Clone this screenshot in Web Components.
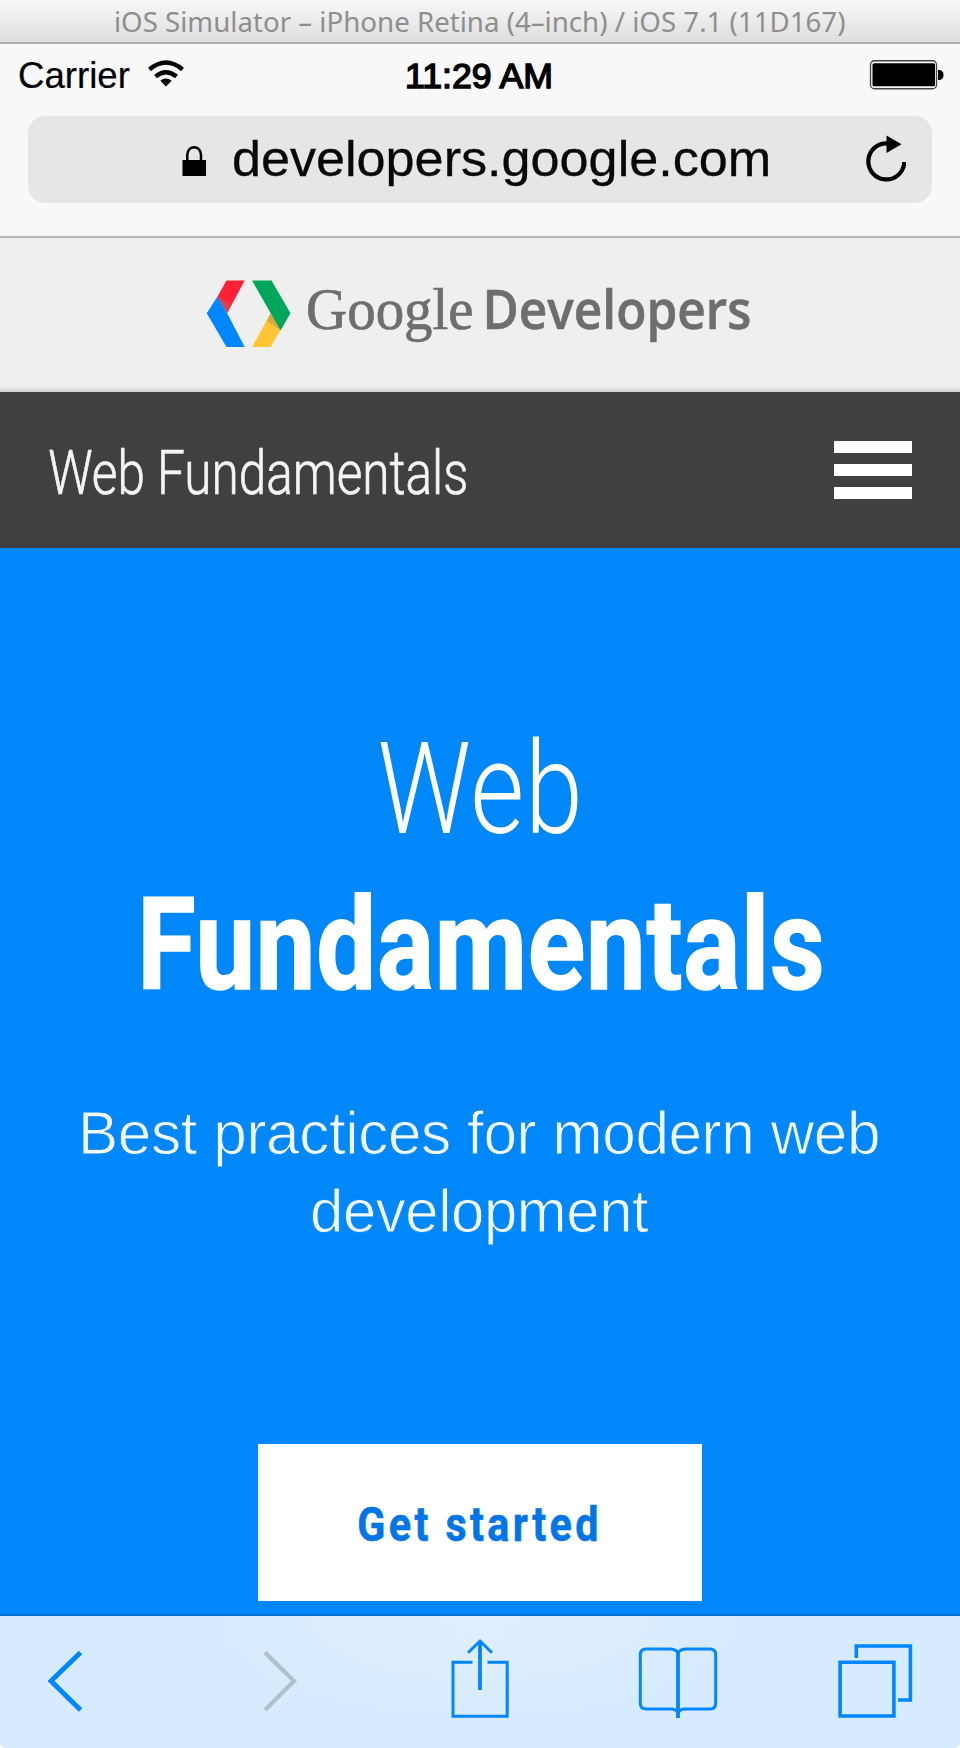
<!DOCTYPE html>
<html lang="en">
<head>
<meta charset="utf-8">
<title>iOS Simulator</title>
<style>
html, body { margin: 0; background: #fff; }
body { font-family: "Liberation Sans", Arial, sans-serif; }
</style>
</head>
<body>
<phone-screen></phone-screen>
<script>
const define = (name, html) => {
  const template = document.createElement('template');
  template.innerHTML = html;
  customElements.define(name, class extends HTMLElement {
    constructor() {
      super();
      this.attachShadow({ mode: 'open' }).append(template.content.cloneNode(true));
    }
  });
};

/* One line of text whose inked width is set by the "width" attribute. */
customElements.define('fit-line', class extends HTMLElement {
  connectedCallback() {
    if (this.shadowRoot) return;
    const get = (n, d) => this.getAttribute(n) || d;
    const text = this.textContent.trim();
    const w = +get('width'), h = +get('height'), base = +get('baseline');
    const size = get('size'), weight = get('weight', '400'), font = get('font', 'Liberation Sans');
    const spacing = get('spacing', '0'), stroke = get('stroke', 'none'), sw = get('stroke-width', '0');
    const ctx = document.createElement('canvas').getContext('2d');
    ctx.font = `${weight} ${size}px "${font}", sans-serif`;
    ctx.letterSpacing = spacing + 'px';
    const m = ctx.measureText(text);
    const k = w / (m.actualBoundingBoxRight + m.actualBoundingBoxLeft);
    const shift = m.actualBoundingBoxLeft * k;
    this.attachShadow({ mode: 'open' }).innerHTML = `
      <style>
        :host { display: block; flex: none; width: ${w}px; height: ${h}px; }
        svg { display: block; overflow: visible; }
        text { font: ${weight} ${size}px "${font}", sans-serif; letter-spacing: ${spacing}px;
               fill: currentColor; stroke: ${stroke}; stroke-width: ${sw}px; }
      </style>
      <svg width="${w}" height="${h}"><text transform="translate(${shift} ${base}) scale(${k} 1)">${text}</text></svg>`;
  }
});

define('title-bar', `
<style>
:host { display: flex; justify-content: center; box-sizing: border-box; height: 44px; color: #8e8e8e;
  background: linear-gradient(#f8f8f8, #dedede); border-bottom: 2px solid #adadad; }
</style>
<fit-line width="729" height="42" baseline="32" size="26.5" font="Noto Sans">iOS Simulator – iPhone Retina (4–inch) / iOS 7.1 (11D167)</fit-line>`);

define('status-bar', `
<style>
:host { display: grid; grid-template-columns: 1fr 146px 1fr; height: 72px; padding: 0 16px 0 19px; color: #000; }
.left { display: flex; gap: 17px; }
.right { display: flex; justify-content: flex-end; }
svg { display: block; }
fit-line.time { margin-left: -2px; }
</style>
<div class="left">
  <fit-line width="111" height="60" baseline="43.500" size="36" stroke="#000" stroke-width=".2">Carrier</fit-line>
  <svg width="38" height="60" viewBox="147 44 38 60" fill="none" stroke="#000" stroke-width="4.4">
    <path d="M149.500 69.500Q166 55.500 182.500 69.500M155.500 76.500Q166 68 176.500 76.500"/>
    <path d="M160.300 80.800Q166 76 171.700 80.800L166 86.500Z" fill="#000" stroke="none"/>
  </svg>
</div>
<fit-line class="time" width="146" height="60" baseline="43.500" size="36" stroke="#000" stroke-width="1.5">11:29 AM</fit-line>
<div class="right">
  <svg width="75" height="60" viewBox="869.500 44 75 60">
    <rect x="871" y="60.750" width="66" height="28" rx="4" fill="none" stroke="#444" stroke-width="1.300"/>
    <rect x="873" y="63.300" width="62.500" height="23" rx="1.500"/>
    <path d="M938.500 70C942.500 70 944 72 944 75S942.500 80 938.500 80Z"/>
  </svg>
</div>`);

define('address-bar', `
<style>
:host { display: block; height: 120px; border-bottom: 2px solid #b5b5b5; }
.field { display: flex; height: 87px; margin: 0 28px; border-radius: 17px; background: #e6e6e6; color: #080808; }
.lock { margin-left: 154px; margin-right: 28px; }
.reload { margin-left: 96px; }
svg { display: block; }
</style>
<div class="field">
  <svg class="lock" width="24" height="87" viewBox="182 116 24 87">
    <rect x="182.500" y="160" width="23.500" height="16"/>
    <path d="M187.300 161V155C187.300 144.500 201 144.500 201 155V161" fill="none" stroke="#000" stroke-width="2.500"/>
  </svg>
  <fit-line width="534" height="87" baseline="59.500" size="49.500" stroke="#080808" stroke-width=".3">developers.google.com</fit-line>
  <svg class="reload" width="42" height="87" viewBox="864 116 42 87">
    <path d="M888 143.500A18 18 0 1 0 904.300 162" fill="none" stroke="#000" stroke-width="4.200"/>
    <path d="M886.500 135.500V153L901.500 144.300Z"/>
  </svg>
</div>`);

define('brand-header', `
<style>
:host { display: flex; box-sizing: border-box; height: 154px; padding-left: 206px;
  background: linear-gradient(#efefef 148px, #d3d3d3 154px); color: #6d6e6e; }
svg { display: block; margin-right: 17px; }
.google { margin-right: 14px; }
</style>
<svg width="85" height="152" viewBox="206 238 85 152">
  <path fill="#ff2035" d="M226.500 280.500H244.700L227.300 313L217.500 296.500Z"/>
  <path fill="#df3e4c" d="M217.500 296.500L231.800 304L227.300 313Z"/>
  <path fill="#0087ff" d="M217.500 296.500L206.700 313.300L226.500 347H244.700L227.300 313.500Z"/>
  <path fill="#ffc535" d="M270.500 313.500L252 347H270.500L281 329.500Z"/>
  <path fill="#daa83b" d="M270.500 313.500L267 321L280.500 330Z"/>
  <path fill="#00a65a" d="M252 280.500H271.500L290.500 313.300L280.500 330.500Z"/>
</svg>
<fit-line class="google" width="164.500" height="152" baseline="91" size="59" font="Liberation Serif" stroke="#6d6e6e" stroke-width=".7">Google</fit-line>
<fit-line width="263" height="152" baseline="91.300" size="54.500" weight="600" font="Open Sans" stroke="#6d6e6e" stroke-width=".6">Developers</fit-line>`);

define('site-nav', `
<style>
:host { display: flex; justify-content: space-between; box-sizing: border-box; height: 156px; padding: 0 48px 0 49px;
  background: #404040; color: #f4f4f4; }
.menu { display: grid; gap: 11px; align-content: start; width: 78px; padding-top: 48.500px; }
.menu i { height: 12px; background: #fff; }
</style>
<fit-line width="417" height="156" baseline="102" size="61" weight="300" font="Roboto" stroke="#f4f4f4" stroke-width=".7">Web Fundamentals</fit-line>
<div class="menu"><i></i><i></i><i></i></div>`);

define('hero-panel', `
<style>
:host { display: flex; flex-direction: column; align-items: center; box-sizing: border-box; height: 1066px; padding-top: 156px;
  background: #0087fa; color: #fff; }
.sub { color: #f2f8ff; }
.sub.first { margin-top: 68px; }
.web { margin-right: 3px; }
.strong { margin-left: 4px; }
.button { display: flex; justify-content: center; box-sizing: border-box; width: 444px; height: 157px; margin-top: 204px; background: #fff; color: #0076e6; }
.button fit-line { margin-right: 4px; }
</style>
<fit-line class="web" width="198" height="156" baseline="129" size="128" weight="300" font="Roboto" spacing="1">Web</fit-line>
<fit-line class="strong" width="677" height="156" baseline="128.500" size="127.500" weight="700" font="Roboto" stroke="#fff" stroke-width="1.600" spacing="1">Fundamentals</fit-line>
<fit-line class="sub first" width="797" height="78" baseline="69.500" size="60.500" spacing="-.4" stroke="#0087fa" stroke-width=".9">Best practices for modern web</fit-line>
<fit-line class="sub" width="337" height="78" baseline="70" size="60.500" spacing="-.4" stroke="#0087fa" stroke-width=".9">development</fit-line>
<div class="button"><fit-line width="237.500" height="157" baseline="97" size="48.500" weight="700" spacing="4" font="Roboto" stroke="#0076e6" stroke-width=".6">Get started</fit-line></div>`);

define('tool-bar', `
<style>
:host { display: block; box-sizing: border-box; height: 134px; border-top: 2px solid #0070cf; border-radius: 0 0 5px 5px;
  background: radial-gradient(ellipse 270px 100px at 480px 0, #e0efff, #d7ebff); }
nav { display: grid; grid-template-columns: 215px 187px 188px 199px 76px; padding-left: 48px; }
svg { display: block; fill: none; stroke: #0087ff; }
</style>
<nav>
  <svg width="36" height="132" viewBox="48 1616 36 132"><path d="M80.500 1652.500L51 1681L80.500 1710" stroke-width="5"/></svg>
  <svg width="36" height="132" viewBox="263 1616 36 132"><path d="M265 1652.500L294 1681L265 1710" stroke="#b0bfcb" stroke-width="4.200"/></svg>
  <svg width="60" height="132" viewBox="450 1616 60 132" stroke-width="3">
    <path d="M472.500 1662.300H453V1716.200H507.200V1662.300H487.500"/>
    <path d="M480 1641V1690" stroke-width="3.800"/><path d="M468 1652.800L480 1641L492 1652.800"/>
  </svg>
  <svg width="80" height="132" viewBox="638 1616 80 132" stroke-width="3">
    <path d="M678 1652.500Q675 1649 670 1649H646Q640.300 1649 640.300 1655V1703Q640.300 1709 646 1709H671Q676 1709 678 1713Q680 1709 685 1709H710Q715.700 1709 715.700 1703V1655Q715.700 1649 710 1649H686Q681 1649 678 1652.500Z"/>
    <path d="M678 1651V1718" stroke-width="3.800"/>
  </svg>
  <svg width="76" height="132" viewBox="837 1616 76 132" stroke-width="3.600">
    <path d="M840.100 1662.300H893.900V1716H840.100Z"/><path d="M856.300 1658V1646H910.400V1700H898"/>
  </svg>
</nav>`);

define('phone-screen', `
<style>
:host { display: flex; flex-direction: column; width: 960px; height: 1748px; overflow: hidden; }
.chrome { background: #f8f8f8; }
</style>
<title-bar></title-bar>
<div class="chrome"><status-bar></status-bar><address-bar></address-bar></div>
<brand-header></brand-header>
<site-nav></site-nav>
<hero-panel></hero-panel>
<tool-bar></tool-bar>`);
</script>
</body>
</html>
